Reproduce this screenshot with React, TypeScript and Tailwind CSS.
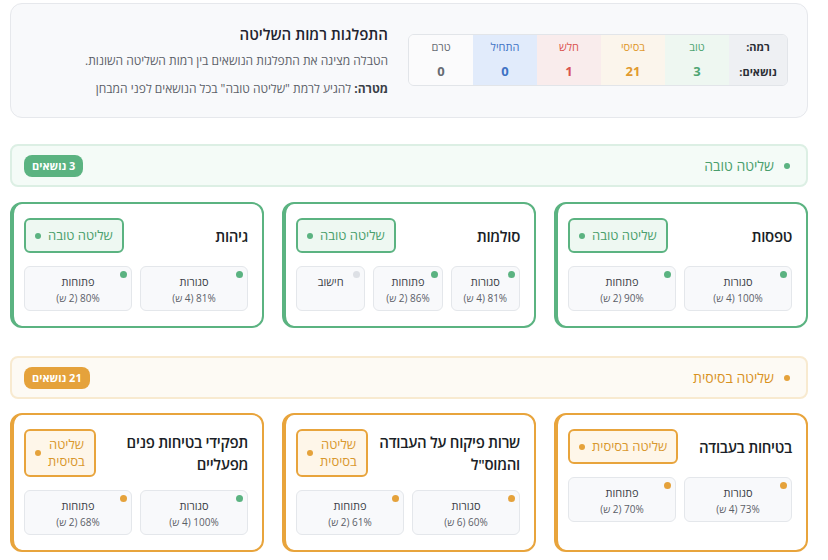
import React from "react";

type Tone = "good" | "basic" | "none";

type SubBox = {
  label: string;
  value?: string;
  tone: Tone;
};

type Topic = {
  title: string;
  boxes: SubBox[];
};

const dotClass: Record<Tone, string> = {
  good: "bg-[#5bb381]",
  basic: "bg-[#e5a23b]",
  none: "bg-[#dde0e5]",
};

const goodTopics: Topic[] = [
  {
    title: "טפסות",
    boxes: [
      { label: "סגורות", value: "100% (4 ש)", tone: "good" },
      { label: "פתוחות", value: "90% (2 ש)", tone: "good" },
    ],
  },
  {
    title: "סולמות",
    boxes: [
      { label: "סגורות", value: "81% (4 ש)", tone: "good" },
      { label: "פתוחות", value: "86% (2 ש)", tone: "good" },
      { label: "חישוב", tone: "none" },
    ],
  },
  {
    title: "גיהות",
    boxes: [
      { label: "סגורות", value: "81% (4 ש)", tone: "good" },
      { label: "פתוחות", value: "80% (2 ש)", tone: "good" },
    ],
  },
];

const basicTopics: Topic[] = [
  {
    title: "בטיחות בעבודה",
    boxes: [
      { label: "סגורות", value: "73% (4 ש)", tone: "basic" },
      { label: "פתוחות", value: "70% (2 ש)", tone: "basic" },
    ],
  },
  {
    title: "שרות פיקוח על העבודה והמוס\"ל",
    boxes: [
      { label: "סגורות", value: "60% (6 ש)", tone: "basic" },
      { label: "פתוחות", value: "61% (2 ש)", tone: "basic" },
    ],
  },
  {
    title: "תפקידי בטיחות פנים מפעליים",
    boxes: [
      { label: "סגורות", value: "100% (4 ש)", tone: "good" },
      { label: "פתוחות", value: "68% (2 ש)", tone: "basic" },
    ],
  },
];

const levels = [
  { name: "טוב", count: "3", cls: "bg-[#eef7f1] text-[#4fa573]" },
  { name: "בסיסי", count: "21", cls: "bg-[#fbf5ec] text-[#e19a2f]" },
  { name: "חלש", count: "1", cls: "bg-[#f9ecec] text-[#d9534f]" },
  { name: "התחיל", count: "0", cls: "bg-[#e1ebfb] text-[#3d72c4]" },
  { name: "טרם", count: "0", cls: "bg-[#fbfbfc] text-[#666b73]" },
];

function DistributionPanel() {
  return (
    <div className="flex h-[115px] items-center gap-5 rounded-xl border border-[#e6e8ec] bg-[#f8f9fb] pl-5 pr-[19px]">
      <div className="mt-[-2px] flex overflow-hidden rounded-md border border-[#e2e5e9] text-[11px]">
        <div className="flex w-[58px] flex-col items-center bg-[#eef0f3] font-bold text-[#2b2f36]">
          <div className="flex h-[25px] items-center">רמה:</div>
          <div className="flex h-[25px] items-center">נושאים:</div>
        </div>
        {levels.map((lvl) => (
          <div key={lvl.name} className={`flex w-[64px] flex-col items-center ${lvl.cls}`}>
            <div className="flex h-[25px] items-center">{lvl.name}</div>
            <div className="flex h-[25px] items-center text-[13px] font-bold">{lvl.count}</div>
          </div>
        ))}
      </div>
      <div className="flex flex-col">
        <h2 className="text-[15px] font-semibold leading-[22px] text-[#1f2430]">התפלגות רמות השליטה</h2>
        <p className="mt-[7px] text-[12px] leading-[18px] text-[#5b6068]">
          הטבלה מציגה את התפלגות הנושאים בין רמות השליטה השונות.
        </p>
        <p className="mt-[10px] text-[12px] leading-[18px] text-[#5b6068]">
          <span className="font-bold text-[#3a3f47]">מטרה:</span> להגיע לרמת "שליטה טובה" בכל הנושאים לפני המבחן
        </p>
      </div>
    </div>
  );
}

function SectionHeader({ tone, label, count }: { tone: "good" | "basic"; label: string; count: string }) {
  const good = tone === "good";
  return (
    <div
      className={`flex h-[43px] items-center justify-between rounded-lg border-2 pl-[12px] pr-[16px] ${
        good ? "border-[#dcefe4] bg-[#f4fbf7]" : "border-[#f8ead0] bg-[#fdfaf4]"
      }`}
    >
      <div className={`flex items-center gap-[10px] text-[14px] ${good ? "text-[#4a9e6c]" : "text-[#d9921f]"}`}>
        <span className={`h-[6px] w-[6px] rounded-full ${good ? "bg-[#5bb381]" : "bg-[#e5a23b]"}`} />
        {label}
      </div>
      <span
        className={`rounded-lg px-[8px] py-[3px] text-[11px] font-bold leading-[16px] text-white ${
          good ? "bg-[#5bb381]" : "bg-[#e5a23b]"
        }`}
      >
        {count}
      </span>
    </div>
  );
}

function TopicCard({ topic, tone }: { topic: Topic; tone: "good" | "basic" }) {
  const good = tone === "good";
  return (
    <div
      className={`flex flex-col rounded-xl border-2 border-l-4 bg-white pb-[15px] pl-[10px] pr-[14px] pt-[14px] ${
        good ? "border-[#5bb381]" : "border-[#e8a43c]"
      }`}
    >
      <div className="flex items-center justify-between gap-[4px]">
        <h3 className="text-[15px] font-semibold leading-[22px] tracking-[-0.3px] text-[#1b1f27]">{topic.title}</h3>
        <div
          className={`flex min-h-[35px] shrink-[3] items-center gap-[7px] rounded-md border-2 px-[9px] py-[5px] text-[13px] leading-[17px] ${
            good ? "border-[#5bb381] bg-[#eef8f2] text-[#4a9e6c]" : "border-[#e8a43c] bg-[#fef6e9] text-[#d9982e]"
          }`}
        >
          <span className="text-center">{good ? "שליטה טובה" : "שליטה בסיסית"}</span>
          <span className={`h-[6px] w-[6px] shrink-0 rounded-full ${good ? "bg-[#5bb381]" : "bg-[#e5a23b]"}`} />
        </div>
      </div>
      <div className="mt-[13px] flex gap-2">
        {topic.boxes.map((b) => (
          <div
            key={b.label}
            className="relative flex h-[45px] flex-1 flex-col items-center rounded-md border border-[#e4e7eb] bg-[#f8f9fb] pt-[7px]"
          >
            <span className={`absolute right-[4px] top-[4px] h-[7px] w-[7px] rounded-full ${dotClass[b.tone]}`} />
            <span className="text-[11px] leading-[15px] text-[#3a3f47]">{b.label}</span>
            {b.value && <span className="mt-[2px] text-[10px] leading-[14px] text-[#5b6068]">{b.value}</span>}
          </div>
        ))}
      </div>
    </div>
  );
}

export default function App() {
  return (
    <div
      dir="rtl"
      className="min-h-[560px] bg-white pb-4 pl-[10px] pr-[20px] pt-[3px]"
      style={{ fontFamily: '"Open Sans", "DejaVu Sans", sans-serif' }}
    >
      <DistributionPanel />

      <div className="mt-[26px]">
        <SectionHeader tone="good" label="שליטה טובה" count="3 נושאים" />
        <div className="mt-[15px] grid grid-cols-3 gap-[18px]">
          {goodTopics.map((t) => (
            <TopicCard key={t.title} topic={t} tone="good" />
          ))}
        </div>
      </div>

      <div className="mt-[28px]">
        <SectionHeader tone="basic" label="שליטה בסיסית" count="21 נושאים" />
        <div className="mt-[14px] grid grid-cols-3 gap-[18px]">
          {basicTopics.map((t) => (
            <TopicCard key={t.title} topic={t} tone="basic" />
          ))}
        </div>
      </div>
    </div>
  );
}
